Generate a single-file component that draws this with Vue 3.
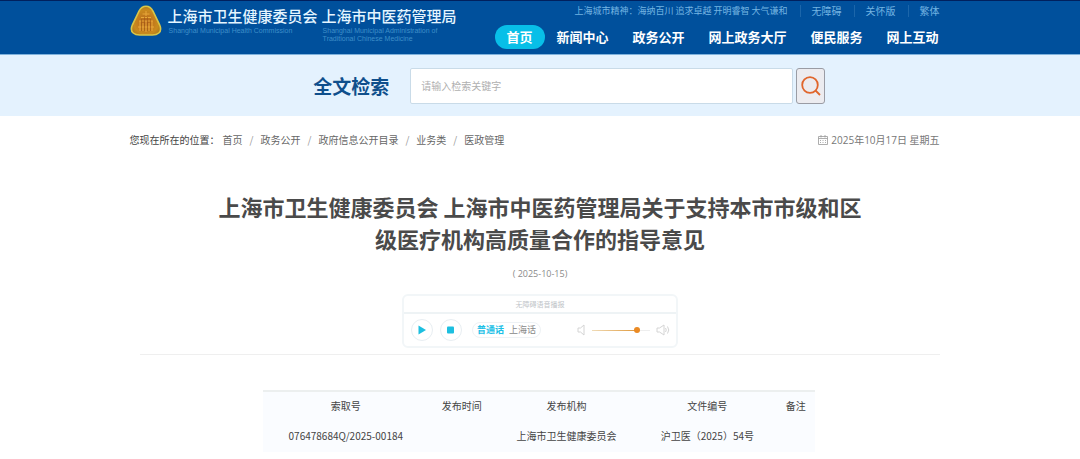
<template>
	<div class="page">
	<header class="site-header">
		<div class="brand">
		<svg class="emblem" viewBox="0 0 32 32" aria-hidden="true">
			<defs>
			<radialGradient id="gold" cx="50%" cy="55%" r="60%">
				<stop offset="0" stop-color="#b5621a" />
				<stop offset="0.7" stop-color="#c98a1e" />
				<stop offset="1" stop-color="#a8771b" />
			</radialGradient>
			</defs>
			<path d="M16 1.2c3.600 0 5.600 2.200 7 5l6.600 13.600c1.600 3.600 1.200 6.400-.8 8.200-1.800 1.600-4 2-6.400 2H9.600c-2.400 0-4.600-.4-6.400-2-2-1.800-2.400-4.600-.8-8.200L9 6.200c1.400-2.800 3.400-5 7-5z" fill="url(#gold)" stroke="#d8c548" stroke-width="1.600" />
			<path d="M16 6v5M12.500 9h7M11 12.500h10M9 16h14M10 16v10M13 18v8M16 16v11M19 18v8M22 16v10M8 22h16" fill="none" stroke="#e9a83a" stroke-width="1" />
			<path d="M11.500 14v12M14.500 12v14M17.500 12v14M20.500 14v12" fill="none" stroke="#9c5516" stroke-width=".6" />
		</svg>
		<div class="brand-name">
			<strong>上海市卫生健康委员会</strong>
			<span>Shanghai Municipal Health Commission</span>
		</div>
		<div class="brand-name">
			<strong>上海市中医药管理局</strong>
			<span>Shanghai Municipal Administration of<br />Traditional Chinese Medicine</span>
		</div>
		</div>
		<div class="header-right">
		<div class="top-links">
			<span class="motto">上海城市精神：海纳百川 追求卓越 开明睿智 大气谦和</span>
			<a v-for="link in topLinks" :key="link" href="#">{{ link }}</a>
		</div>
		<nav class="main-nav">
			<a
			v-for="item in navItems"
			:key="item"
			href="#"
			:class="{ active: item === activeNav }"
			@click.prevent="activeNav = item"
			>{{ item }}</a>
		</nav>
		</div>
	</header>

	<form class="search-bar" @submit.prevent>
		<label for="keyword">全文检索</label>
		<input id="keyword" v-model="keyword" type="text" placeholder="请输入检索关键字" />
		<button type="submit" aria-label="检索">
		<svg viewBox="0 0 20 20" aria-hidden="true">
			<circle cx="9" cy="9" r="7.800" />
			<path d="M14.500 14.500l4.500 4.500" />
		</svg>
		</button>
	</form>

	<div class="location">
		<div class="breadcrumb">
		<span class="breadcrumb-label">您现在所在的位置：</span>
		<a v-for="crumb in crumbs" :key="crumb" href="#">{{ crumb }}</a>
		</div>
		<div class="today">
		<svg viewBox="0 0 10 10" aria-hidden="true">
			<path d="M.5 1.500h9v8h-9zM.5 3.500h9M3 0v2.500M7 0v2.500M2 5.500h1M4.500 5.500h1M7 5.500h1M2 7.500h1M4.500 7.500h1M7 7.500h1" />
		</svg>
		2025年10月17日 星期五
		</div>
	</div>

	<main class="article">
		<h1>上海市卫生健康委员会 上海市中医药管理局关于支持本市市级和区<br />级医疗机构高质量合作的指导意见</h1>
		<p class="publish-date">( 2025-10-15)</p>

		<section class="player">
		<div class="player-title">无障碍语音播报</div>
		<div class="player-controls">
			<button type="button" class="round-btn" aria-label="播放">
			<svg viewBox="0 0 8 10" aria-hidden="true"><path d="M.5.500L8 5 .5 9.500z" /></svg>
			</button>
			<button type="button" class="round-btn" aria-label="停止">
			<svg viewBox="0 0 8 10" aria-hidden="true"><rect y="1.500" width="7" height="7" rx="1" /></svg>
			</button>
			<div class="dialects">
			<button
				v-for="name in dialects"
				:key="name"
				type="button"
				:class="{ active: name === dialect }"
				@click="dialect = name"
			>{{ name }}</button>
			</div>
			<svg class="speaker" viewBox="0 0 14 12" aria-hidden="true">
			<path d="M3 4h2.500L9 1v10L5.500 8H3z" />
			</svg>
			<input v-model="volume" type="range" min="0" max="100" aria-label="音量" />
			<svg class="speaker" viewBox="0 0 14 12" aria-hidden="true">
			<path d="M1 4h2.500L8 1v10L3.500 8H1zM9.500 4q1.500 2 0 4M11.500 2.500q2.500 3.500 0 7" />
			</svg>
		</div>
		</section>
	</main>

	<div class="record">
		<table>
		<thead>
			<tr>
			<th v-for="col in columns" :key="col.title" :style="{ width: col.width }">{{ col.title }}</th>
			</tr>
		</thead>
		<tbody>
			<tr>
			<td v-for="col in columns" :key="col.title">{{ col.value }}</td>
			</tr>
		</tbody>
		</table>
	</div>
	</div>
</template>

<script setup>
import { ref } from 'vue'

const topLinks = ['无障碍', '关怀版', '繁体']
const navItems = ['首页', '新闻中心', '政务公开', '网上政务大厅', '便民服务', '网上互动']
const activeNav = ref('首页')
const keyword = ref('')

const crumbs = ['首页', '政务公开', '政府信息公开目录', '业务类', '医政管理']

const dialects = ['普通话', '上海话']
const dialect = ref('普通话')
const volume = ref(80)

const columns = [
	{ title: '索取号', value: '076478684Q/2025-00184', width: '30%' },
	{ title: '发布时间', value: '', width: '12%' },
	{ title: '发布机构', value: '上海市卫生健康委员会', width: '26%' },
	{ title: '文件编号', value: '沪卫医（2025）54号', width: '25%' },
	{ title: '备注', value: '', width: '7%' }
]
</script>

<style>
body {
	background: #fff;
}
</style>

<style scoped>
.page {
	font-family: "Noto Sans CJK SC", sans-serif;
	font-size: 10px;
	line-height: 16px;
	color: #666;
}

a {
	color: inherit;
	text-decoration: none;
}

button,
input {
	font-family: inherit;
	margin: 0;
	box-sizing: border-box;
}

button {
	cursor: pointer;
}

.site-header {
	display: flex;
	justify-content: space-between;
	box-sizing: border-box;
	height: 55px;
	padding: 4px 13% 0 12%;
	background: #00509c;
	border-top: 1px solid #00205e;
	border-bottom: 1px solid #7fb2dc;
}

.brand {
	display: flex;
	gap: 4px;
}

.emblem {
	width: 32px;
	height: 32px;
	margin-right: 2px;
}

.brand-name {
	display: flex;
	flex-direction: column;
}

.brand-name strong {
	font-size: 15px;
	font-weight: 500;
	line-height: 22px;
	color: #e4f5ff;
	white-space: nowrap;
}

.brand-name span {
	padding-left: 1px;
	font-family: "Liberation Sans", sans-serif;
	font-size: 7px;
	line-height: 8px;
	color: #3e8fc9;
	white-space: nowrap;
}

.header-right {
	display: flex;
	flex-direction: column;
	align-items: flex-end;
	gap: 8px;
}

.top-links {
	display: flex;
	line-height: 12px;
	color: #74b4e2;
	white-space: nowrap;
}

.motto {
	font-size: 9px;
}

.top-links a {
	margin-left: 12px;
	padding-left: 11px;
	border-left: 1px solid #1c66aa;
}

.main-nav {
	display: flex;
	margin-right: -11px;
}

.main-nav a {
	padding: 0 12px;
	border-radius: 12px;
	font-size: 13px;
	font-weight: bold;
	line-height: 24px;
	color: #fff;
	white-space: nowrap;
}

.main-nav a.active {
	background: #08bfe8;
}

.search-bar {
	display: flex;
	align-items: center;
	box-sizing: border-box;
	height: 61px;
	padding: 0 255px 0 29%;
	background: #e4f2fe;
}

.search-bar label {
	margin-right: 21px;
	font-size: 19px;
	font-weight: bold;
	color: #0f4f8c;
	white-space: nowrap;
}

.search-bar input {
	flex: 1;
	min-width: 0;
	height: 36px;
	padding: 0 10px;
	border: 1px solid #c9dbe8;
	border-radius: 2px;
	font-size: 10px;
	background: #fff;
}

.search-bar input::placeholder {
	color: #b0b0b0;
}

.search-bar button {
	display: flex;
	align-items: center;
	justify-content: center;
	width: 29px;
	height: 36px;
	margin-left: 3px;
	padding: 0;
	border: 1px solid #9a9ca4;
	border-radius: 3px;
	background: #ececf0;
}

.search-bar svg {
	width: 20px;
	height: 20px;
	fill: none;
	stroke: #e0662c;
	stroke-width: 1.8;
}

.location {
	display: flex;
	justify-content: space-between;
	padding: 16px 13% 0 12%;
}

.breadcrumb {
	display: flex;
}

.breadcrumb-label {
	margin-right: 3px;
	color: #444;
}

.breadcrumb a + a::before {
	content: "/";
	padding: 0 7px;
	color: #999;
}

.today {
	display: flex;
	align-items: center;
	gap: 3px;
	font-family: "Open Sans", "Noto Sans CJK SC", sans-serif;
	color: #777;
}

.today svg {
	width: 10px;
	height: 10px;
	fill: none;
	stroke: #999;
	stroke-width: 0.8;
}

.article {
	display: flex;
	flex-direction: column;
	align-items: center;
	margin: 42px 13% 0;
	padding-bottom: 6px;
	border-bottom: 1px solid #efefef;
}

.article h1 {
	margin: 0;
	font-size: 22px;
	font-weight: bold;
	line-height: 32px;
	text-align: center;
	color: #4a4a4a;
	white-space: nowrap;
}

.publish-date {
	margin: 12px 0;
	font-family: "Open Sans", sans-serif;
	font-size: 9px;
	color: #8a8a8a;
}

.player {
	width: 276px;
	box-sizing: border-box;
	border: 2px solid #f2f6f8;
	border-radius: 6px;
}

.player-title {
	border-bottom: 2px solid #eef3f5;
	font-size: 7px;
	text-align: center;
	color: #c0c4c8;
}

.player-controls {
	display: flex;
	align-items: center;
	height: 32px;
	padding: 0 6px 0 7px;
}

.round-btn {
	display: flex;
	align-items: center;
	justify-content: center;
	width: 22px;
	height: 22px;
	margin-right: 7px;
	padding: 0;
	border: 1px solid #e8eef2;
	border-radius: 50%;
	background: #fff;
}

.round-btn svg {
	width: 8px;
	height: 10px;
	fill: #1cbfe0;
}

.dialects {
	display: flex;
	gap: 5px;
	margin: 0 auto 0 3px;
	padding: 0 4px;
	border: 1px solid #eef2f5;
	border-radius: 8px;
}

.dialects button {
	padding: 0;
	border: 0;
	background: none;
	font-size: 9px;
	line-height: 14px;
	color: #888;
}

.dialects button.active {
	font-weight: bold;
	color: #1cc0e6;
}

.speaker {
	width: 14px;
	height: 12px;
	fill: none;
	stroke: #d4d4d4;
	stroke-width: 1;
}

.player-controls input {
	appearance: none;
	width: 58px;
	height: 8px;
	margin: 0 6px 0 3px;
	background: linear-gradient(90deg, #f0dcb8, #e09a3c 76%, #eee 76%) center / 100% 1px no-repeat;
}

.player-controls input::-webkit-slider-thumb {
	appearance: none;
	width: 6px;
	height: 6px;
	border-radius: 50%;
	background: #ea8a24;
}

.record {
	padding: 35px 265px 0 263px;
}

table {
	width: 100%;
	border-collapse: collapse;
	table-layout: fixed;
	background: #fafcff;
}

th,
td {
	padding: 0;
	height: 32px;
	font-weight: normal;
	text-align: center;
	white-space: nowrap;
	color: #444;
}

th {
	height: 28px;
	border-top: 2px solid #ecefef;
}
</style>
